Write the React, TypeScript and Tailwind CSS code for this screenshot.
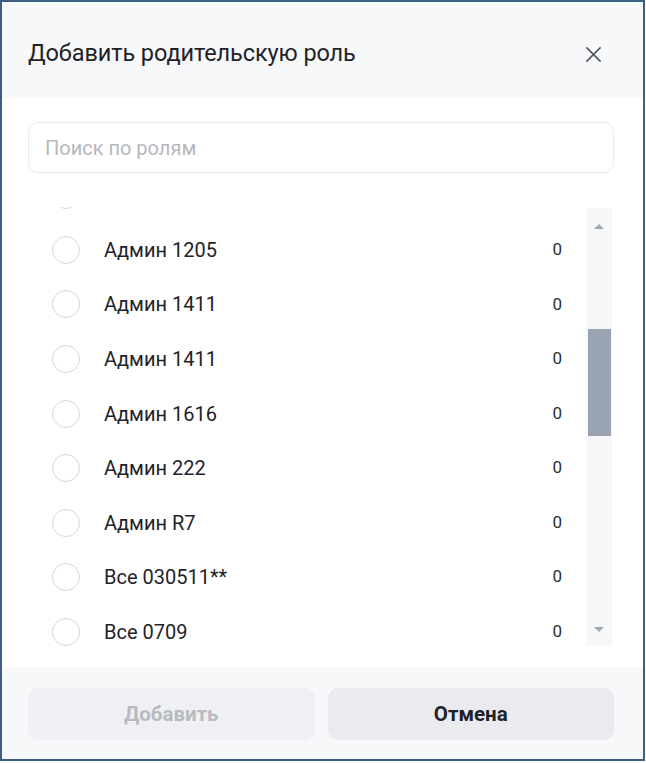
import React from "react";

const rows = [
  "",
  "Админ 1205",
  "Админ 1411",
  "Админ 1411",
  "Админ 1616",
  "Админ 222",
  "Админ R7",
  "Все 030511**",
  "Все 0709",
];

export default function App() {
  return (
    <div className="w-[646px] h-[763px] bg-white" style={{ fontFamily: "Roboto, 'Noto Sans', sans-serif" }}>
      <div className="w-[645px] h-[761px] border-2 border-[#3b6086] flex flex-col bg-white overflow-hidden">
        <div className="h-[96px] shrink-0 bg-[#f7f8fa] flex items-center justify-between pl-[26px] pr-[41px] pt-[8px]">
          <div className="text-[23.5px] text-[#1f2329] tracking-[-0.1px]">Добавить родительскую роль</div>
          <svg width="17" height="17" viewBox="0 0 18 18" fill="none" stroke="#555a61" strokeWidth="1.8" strokeLinecap="round">
            <path d="M2 2L16 16M16 2L2 16" />
          </svg>
        </div>
        <div className="flex-1 flex flex-col pl-[26px] pr-[29px] pt-[24px]">
          <div className="h-[51px] rounded-[10px] border border-[#e9ebee] flex items-center pl-[16px] text-[20px] text-[#b4b8bd]">
            Поиск по ролям
          </div>
          <div className="mt-[34px] h-[439px] flex">
            <div className="flex-1 overflow-hidden">
              <div className="mt-[-39px]">
                {rows.map((r, i) => (
                  <div key={i} className="h-[54.57px] flex items-center pl-[24px] pr-[24px]">
                    <div className="w-[28px] h-[28px] rounded-full border border-[#d6d8dc] shrink-0" />
                    <div className="ml-[24px] flex-1 text-[20px] text-[#1f2329]">{r}</div>
                    {r && <div className="text-[17px] text-[#2a2e33]">0</div>}
                  </div>
                ))}
              </div>
            </div>
            <div className="w-[26px] mr-[2px] mt-[1px] bg-[#f6f7f9] flex flex-col items-center">
              <svg width="12" height="8" viewBox="0 0 12 8" className="mt-[15px]">
                <path d="M6 1L11 6H1Z" fill="#a0a8b5" />
              </svg>
              <div className="w-[23px] h-[107px] bg-[#9aa3b1] mt-[98px]" />
              <div className="flex-1" />
              <svg width="12" height="8" viewBox="0 0 12 8" className="mb-[13px]">
                <path d="M1 2H11L6 7Z" fill="#a0a8b5" />
              </svg>
            </div>
          </div>
        </div>
        <div className="h-[92px] shrink-0 bg-[#f7f8fa] flex gap-[13px] pl-[26px] pr-[29px] pt-[21px]">
          <div className="flex-1 h-[52px] rounded-[10px] bg-[#eff0f3] flex items-center justify-center text-[20.5px] font-bold text-[#b8bbc0]">
            Добавить
          </div>
          <div className="flex-1 h-[52px] rounded-[10px] bg-[#e9ebef] flex items-center justify-center text-[20.5px] font-bold text-[#1f2329]">
            Отмена
          </div>
        </div>
      </div>
    </div>
  );
}
